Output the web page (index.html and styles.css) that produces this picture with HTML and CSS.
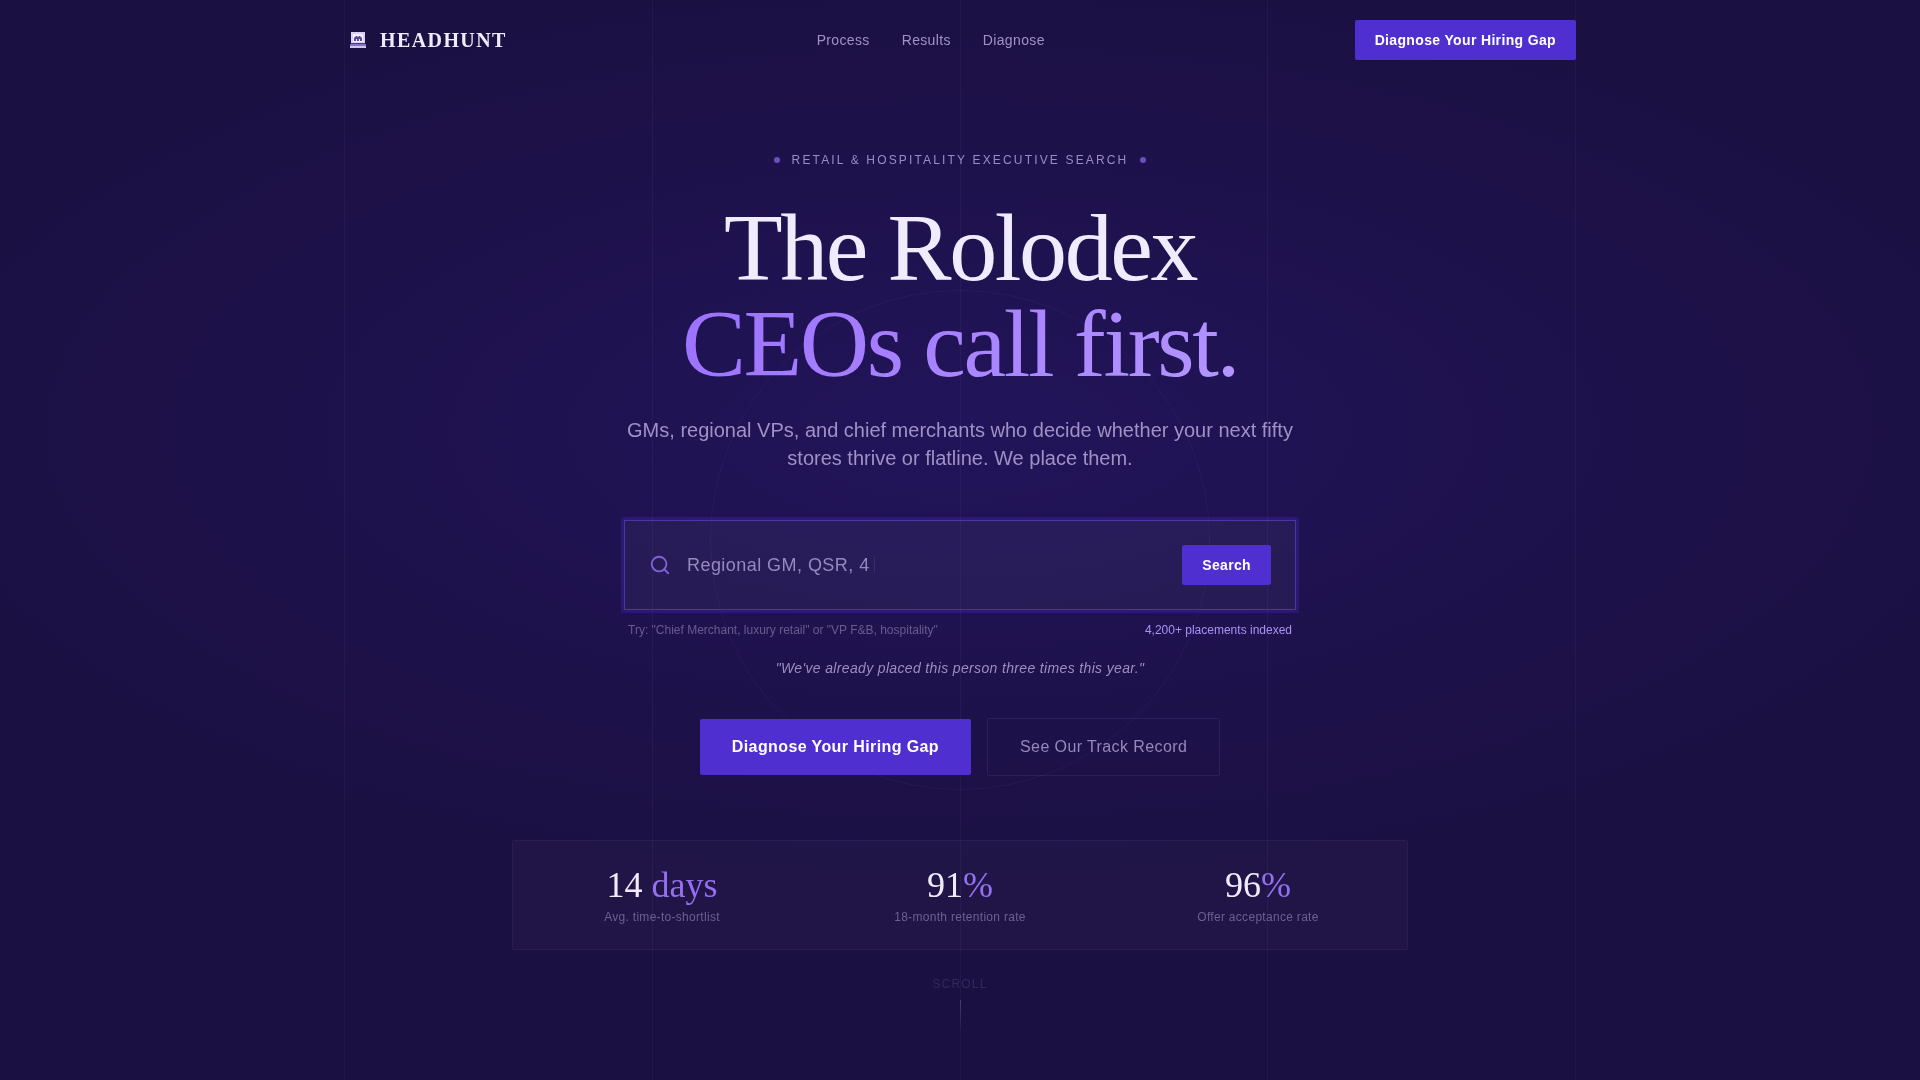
FILE: index.html
```html
<!DOCTYPE html>
<html lang="en">
<head>
    <meta charset="UTF-8">
    <meta name="viewport" content="width=device-width, initial-scale=1.0">
    <title>Headhunt</title>
    <link rel="stylesheet" href="styles.css">
</head>
<body>
    <!-- background lines and ring -->
    <div class="backdrop" aria-hidden="true">
        <div class="grid-lines">
            <span></span><span></span><span></span><span></span>
        </div>
        <div class="ring"></div>
    </div>

    <header class="nav">
        <a class="logo" href="#">
            <svg class="logo-icon" width="28" height="28" viewBox="0 0 28 28" aria-hidden="true">
                <path d="M7 6h14v11H7z" fill="#d9d0f5"/>
                <path d="M9 8h10v8H9z" fill="#f4f0ff"/>
                <path d="M10 15v-3l2-2h1l1 1 1-1h1l2 2v3h-2v-2h-1v2h-2v-2h-1v2z" fill="#5a479f"/>
                <path d="M7 17h14v1H7z" fill="#4a3a86"/>
                <path d="M6 18h16v2H6z" fill="#8474c0"/>
                <path d="M6 20h16v2H6z" fill="#cfc5ef"/>
            </svg>
            <span>HEADHUNT</span>
        </a>
        <nav class="nav-links">
            <a href="#process">Process</a>
            <a href="#results">Results</a>
            <a href="#diagnose">Diagnose</a>
        </nav>
        <a class="btn btn-small" href="#diagnose">Diagnose Your Hiring Gap</a>
    </header>

    <main class="hero">
        <p class="eyebrow"><span class="dot"></span>Retail &amp; Hospitality Executive Search<span class="dot"></span></p>
        <h1>The Rolodex <span class="accent">CEOs call first.</span></h1>
        <p class="lead">GMs, regional VPs, and chief merchants who decide whether your next fifty stores thrive or flatline. We place them.</p>

        <form class="search">
            <svg class="search-icon" width="22" height="22" viewBox="0 0 24 24" fill="none" stroke="currentColor" stroke-width="2" stroke-linecap="round" stroke-linejoin="round" aria-hidden="true">
                <circle cx="11" cy="11" r="8"/>
                <path d="M21 21l-4.35-4.35"/>
            </svg>
            <label class="search-field">
                <input type="text" name="role" aria-label="Search roles" placeholder="Regional GM, QSR, 4">
                <span class="caret"></span>
            </label>
            <button class="btn btn-small" type="submit">Search</button>
        </form>
        <div class="search-hints">
            <span>Try: "Chief Merchant, luxury retail" or "VP F&amp;B, hospitality"</span>
            <span class="indexed">4,200+ placements indexed</span>
        </div>
        <p class="quote">"We've already placed this person three times this year."</p>

        <div class="actions">
            <a class="btn btn-large" href="#diagnose">Diagnose Your Hiring Gap</a>
            <a class="btn-outline" href="#results">See Our Track Record</a>
        </div>

        <div class="stats">
            <div class="stat">
                <div class="stat-value">14<span> days</span></div>
                <div class="stat-label">Avg. time-to-shortlist</div>
            </div>
            <div class="stat">
                <div class="stat-value">91<span>%</span></div>
                <div class="stat-label">18-month retention rate</div>
            </div>
            <div class="stat">
                <div class="stat-value">96<span>%</span></div>
                <div class="stat-label">Offer acceptance rate</div>
            </div>
        </div>

        <div class="scroll">
            <span>SCROLL</span>
            <div class="scroll-line"></div>
        </div>
    </main>
</body>
</html>
```
FILE: styles.css
```css
* {
    box-sizing: border-box;
}
body {
    margin: 0;
    min-height: 100vh;
    font-family: "Liberation Sans", Arial, sans-serif;
    color: #f1ecfd;
    background: radial-gradient(ellipse 80% 60% at 50% 40%, #22145a 0%, #1b1042 70%) #1b1042;
}
a {
    color: inherit;
    text-decoration: none;
}
h1, p {
    margin: 0;
}

/* background */
.backdrop {
    position: fixed;
    inset: 0;
    z-index: -1;
    overflow: hidden;
}
.grid-lines {
    max-width: 1232px;
    height: 100%;
    margin: 0 auto;
    display: grid;
    grid-template-columns: repeat(4, 1fr);
    border-right: 1px solid rgba(160, 130, 255, 0.07);
}
.grid-lines span {
    border-left: 1px solid rgba(160, 130, 255, 0.07);
}
.ring {
    position: absolute;
    left: 50%;
    top: 50%;
    width: 500px;
    height: 500px;
    transform: translate(-50%, -50%);
    border: 1px solid rgba(150, 110, 255, 0.07);
    border-radius: 50%;
}

/* nav */
.nav {
    max-width: 1232px;
    height: 80px;
    margin: 0 auto;
    display: flex;
    align-items: center;
    justify-content: space-between;
}
.logo {
    display: flex;
    align-items: center;
    gap: 8px;
    font-family: "Liberation Serif", Georgia, serif;
    font-size: 20px;
    font-weight: bold;
    letter-spacing: 0.07em;
}
.nav-links {
    display: flex;
    gap: 32px;
    font-size: 14px;
    letter-spacing: 0.025em;
    color: #a093c4;
}

/* buttons */
.btn {
    display: inline-block;
    border: 0;
    border-radius: 2px;
    background: #4f2fd0;
    color: #fff;
    font-family: inherit;
    font-weight: bold;
    letter-spacing: 0.025em;
    cursor: pointer;
}
.btn-small {
    padding: 0 20px;
    font-size: 14px;
    line-height: 40px;
}
.btn-large {
    padding: 0 32px;
    font-size: 16px;
    line-height: 56px;
}
.btn-outline {
    padding: 0 32px;
    border: 1px solid rgba(160, 130, 255, 0.12);
    border-radius: 2px;
    color: #9588bd;
    font-size: 16px;
    line-height: 56px;
    letter-spacing: 0.025em;
}

/* hero */
.hero {
    display: flex;
    flex-direction: column;
    align-items: center;
    padding: 72px 24px 48px;
}
.eyebrow {
    display: flex;
    align-items: center;
    gap: 12px;
    font-size: 12px;
    line-height: 16px;
    letter-spacing: 0.18em;
    text-transform: uppercase;
    color: #9b8cc4;
}
.dot {
    width: 6px;
    height: 6px;
    border-radius: 50%;
    background: #6a4fc0;
}
h1 {
    margin-top: 32px;
    font-family: "Liberation Serif", Georgia, serif;
    font-size: 96px;
    font-weight: normal;
    line-height: 96px;
    letter-spacing: -0.025em;
    text-align: center;
}
.accent {
    display: block;
    background: linear-gradient(135deg, #9b70ff, #b496ff);
    -webkit-background-clip: text;
    background-clip: text;
    color: transparent;
}
.lead {
    max-width: 672px;
    margin-top: 24px;
    font-size: 20px;
    line-height: 28px;
    text-align: center;
    color: #9f92c4;
}
.search {
    width: 100%;
    max-width: 672px;
    margin-top: 48px;
    padding: 24px;
    display: flex;
    align-items: center;
    gap: 16px;
    border: 1px solid #4e35a4;
    background: rgba(255, 255, 255, 0.04);
    box-shadow: 0 0 0 3px rgba(79, 47, 208, 0.22), 0 0 6px rgba(79, 47, 208, 0.25);
}
.search-icon {
    color: #8062d8;
}
.search-field {
    flex: 1;
    display: flex;
    align-items: center;
    gap: 4px;
}
.search-field input {
    field-sizing: content;
    padding: 0;
    border: 0;
    outline: 0;
    background: none;
    color: #f1ecfd;
    font-family: inherit;
    font-size: 18px;
    letter-spacing: 0.025em;
}
.search-field input::placeholder {
    color: #9689bd;
}
.caret {
    width: 1px;
    height: 16px;
    background: #3a2a75;
}
.search-hints {
    width: 100%;
    max-width: 664px;
    margin-top: 12px;
    display: flex;
    justify-content: space-between;
    font-size: 12px;
    line-height: 16px;
    color: #685c90;
}
.indexed {
    color: #ab91f5;
}
.quote {
    margin-top: 20px;
    font-size: 14px;
    line-height: 20px;
    font-style: italic;
    letter-spacing: 0.025em;
    color: #9b8ec2;
}
.actions {
    margin-top: 40px;
    display: flex;
    align-items: center;
    gap: 16px;
}

/* stats */
.stats {
    width: 100%;
    max-width: 896px;
    margin-top: 64px;
    padding: 24px 0;
    display: grid;
    grid-template-columns: repeat(3, 1fr);
    border: 1px solid rgba(160, 130, 255, 0.07);
    border-radius: 2px;
    background: rgba(255, 255, 255, 0.025);
    text-align: center;
}
.stat-value {
    font-family: "Liberation Serif", Georgia, serif;
    font-size: 36px;
    line-height: 40px;
}
.stat-value span {
    color: #9470f0;
}
.stat-label {
    margin-top: 4px;
    font-size: 12px;
    line-height: 16px;
    letter-spacing: 0.025em;
    color: #6c6092;
}
.scroll {
    margin-top: 26px;
    display: flex;
    flex-direction: column;
    align-items: center;
    gap: 8px;
    font-size: 12px;
    line-height: 16px;
    letter-spacing: 0.1em;
    color: #35285f;
}
.scroll-line {
    width: 1px;
    height: 32px;
    background: linear-gradient(#4a3b7c, transparent);
}
```
